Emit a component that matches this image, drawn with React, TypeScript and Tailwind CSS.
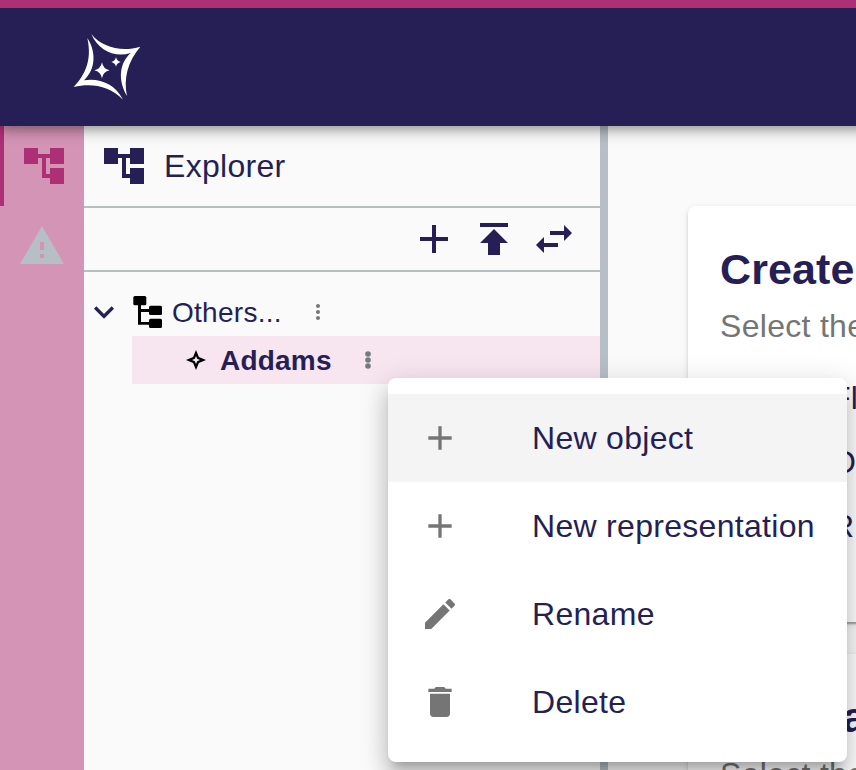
import React from "react";

const TREE = "M22 11V3h-7v3H9V3H2v8h7V8h2v10h4v3h7v-8h-7v3h-2V8h2v3z";
const ADD = "M19 13h-6v6h-2v-6H5v-2h6V5h2v6h6v2z";
const PUBLISH = "M5 4v2h14V4H5zm0 10h4v6h6v-6h4l-7-7-7 7z";
const SWAP = "M6.99 11L3 15l3.99 4v-3H14v-2H6.99v-3zM21 9l-3.99-4v3H10v2h7.01v3L21 9z";
const WARNING = "M1 21h22L12 2 1 21zm12-3h-2v-2h2v2zm0-4h-2v-4h2v4z";
const EXPAND = "M16.59 8.59L12 13.17 7.41 8.59 6 10l6 6 6-6z";
const MORE =
  "M12 8c1.1 0 2-.9 2-2s-.9-2-2-2-2 .9-2 2 .9 2 2 2zm0 2c-1.1 0-2 .9-2 2s.9 2 2 2 2-.9 2-2-.9-2-2-2zm0 6c-1.1 0-2 .9-2 2s.9 2 2 2 2-.9 2-2-.9-2-2-2z";
const EDIT =
  "M3 17.25V21h3.75L17.81 9.94l-3.75-3.75L3 17.25zM20.71 7.04c.39-.39.39-1.02 0-1.41l-2.34-2.34c-.39-.39-1.02-.39-1.41 0l-1.83 1.83 3.75 3.75 1.83-1.83z";
const DELETE = "M6 19c0 1.1.9 2 2 2h8c1.1 0 2-.9 2-2V7H6v12zM19 4h-3.5l-1-1h-5l-1 1H5v2h14V4z";

function Icon({ d, className }: { d: string; className: string }) {
  return (
    <svg viewBox="0 0 24 24" fill="currentColor" className={`shrink-0 ${className}`}>
      <path d={d} />
    </svg>
  );
}

function Logo() {
  return (
    <svg viewBox="0 0 300 270" className="mb-1 ml-[60px] h-[90px] w-[100px]" fill="#fff">
      <path d="M82 54C107 92 110 145 72 181C115 173 165 190 189 239C150 198 95 188 41 201C90 150 92 100 82 54Z" />
      <path d="M94 42C125 82 185 97 241 80C203 125 190 175 201 228C173 180 178 130 212 99C165 114 115 92 94 42Z" />
      <path d="M126 127Q129 147 149 151Q129 155 126 175Q122 155 103 151Q122 147 126 127Z" />
      <path d="M168 111Q170 123 182 126Q170 129 168 140Q166 129 154 126Q166 123 168 111Z" />
    </svg>
  );
}

const MENU = [
  { icon: ADD, label: "New object" },
  { icon: ADD, label: "New representation" },
  { icon: EDIT, label: "Rename" },
  { icon: DELETE, label: "Delete" },
];

function Card({ title, items }: { title: string; items: string[] }) {
  return (
    <section className="h-[416px] w-[800px] shrink-0 rounded-lg bg-white px-8 pt-8 shadow-[0_4px_2px_-2px_rgba(0,0,0,0.2),0_2px_2px_rgba(0,0,0,0.14),0_2px_6px_rgba(0,0,0,0.12)]">
      <h2 className="flex h-[62px] items-center text-[43px] font-bold leading-none tracking-[0.1px]">{title}</h2>
      <p className="flex h-[52px] items-center text-[32px] tracking-[0.3px] text-[#757575]">
        Select the
      </p>
      <ul className="pl-[111px] pt-[14px]">
        {items.map((item) => (
          <li key={item} className="flex h-16 items-center text-[32px] tracking-[0.3px]">
            {item}
          </li>
        ))}
      </ul>
    </section>
  );
}

export default function App() {
  return (
    <div className="relative flex h-[770px] w-[856px] flex-col overflow-hidden whitespace-nowrap bg-[#fafafa] font-['Liberation_Sans',Arial,sans-serif] text-[#251f55] antialiased">
      <header className="relative z-10 flex h-[126px] w-[1200px] shrink-0 items-center border-t-8 border-[#ad3077] bg-[#251f55] shadow-[0_4px_8px_-2px_rgba(0,0,0,0.2),0_8px_10px_rgba(0,0,0,0.14),0_2px_20px_rgba(0,0,0,0.12)]">
        <Logo />
      </header>
      <div className="flex min-h-0 flex-1">
        <nav className="flex w-[84px] shrink-0 flex-col bg-[#d494b6]">
          <div className="flex h-20 items-center border-l-4 border-[#ad3077] pl-4 text-[#ad3077]">
            <Icon d={TREE} className="h-12 w-12" />
          </div>
          <div className="flex h-20 items-center pl-[18px] text-[#b6bfc5]">
            <Icon d={WARNING} className="h-12 w-12" />
          </div>
        </nav>
        <aside className="flex w-[516px] shrink-0 flex-col">
          <div className="flex h-[82px] items-center border-b-2 border-[#b4bfc2] pl-4">
            <Icon d={TREE} className="h-12 w-12" />
            <h1 className="ml-4 text-[32px] tracking-[0.3px]">Explorer</h1>
          </div>
          <div className="flex h-16 items-center justify-end gap-3 border-b-2 border-[#b4bfc2] pr-[22px]">
            <Icon d={ADD} className="h-12 w-12" />
            <Icon d={PUBLISH} className="h-12 w-12" />
            <Icon d={SWAP} className="h-12 w-12" />
          </div>
          <div className="pt-4">
            <div className="flex h-12 items-center">
              <Icon d={EXPAND} className="h-10 w-10" />
              <svg viewBox="0 0 29 32" className="ml-[9px] h-8 w-[29px]" fill="#000">
                <rect x="0.300" y="0" width="13" height="9.300" rx="1.500" />
                <rect x="16" y="9.700" width="13" height="9.300" rx="1.500" />
                <rect x="16" y="22.700" width="13" height="9.300" rx="1.500" />
                <path d="M5 8v20.700h12v-2.700H8v-10h9v-3H8V8z" />
              </svg>
              <span className="ml-[10px] pt-0.5 text-[28px] tracking-[0.28px]">Others...</span>
              <Icon d={MORE} className="ml-6 h-6 w-6 text-[#757575]" />
            </div>
            <div className="ml-12 flex h-12 items-center bg-[#f7e5ef]">
              <svg viewBox="0 0 20 20" className="ml-[54px] h-5 w-5" fill="#000" fillRule="evenodd">
                <path d="M10 0L12.900 7.100L20 10L12.900 12.900L10 20L7.100 12.900L0 10L7.100 7.100ZM10 6L8.800 8.800L6 10L8.800 11.200L10 14L11.200 11.200L14 10L11.200 8.800Z" />
              </svg>
              <span className="ml-[14px] pt-0.5 text-[28px] font-bold tracking-[0.2px]">Addams</span>
              <svg viewBox="0 0 24 24" className="ml-6 h-6 w-6" fill="#757a80">
                <circle cx="12" cy="6" r="2.800" />
                <circle cx="12" cy="12" r="2.800" />
                <circle cx="12" cy="18" r="2.800" />
              </svg>
            </div>
          </div>
        </aside>
        <div className="w-2 shrink-0 bg-[#b6bfc5]" />
        <main className="flex min-w-0 flex-1 flex-col gap-8 pl-20 pt-20">
          <Card title="Create" items={["Fl", "O", "R"]} />
          <Card title="Open a" items={[]} />
        </main>
      </div>
      <div className="absolute left-[388px] top-[378px] z-20 h-[384px] w-[459px] rounded-lg bg-white py-4 shadow-[0_10px_10px_-6px_rgba(0,0,0,0.2),0_16px_20px_2px_rgba(0,0,0,0.14),0_6px_28px_4px_rgba(0,0,0,0.12)]">
        {MENU.map((m, i) => (
          <div key={m.label} className={`flex h-[88px] items-center pl-8 ${i === 0 ? "bg-[#f4f4f4]" : ""}`}>
            <Icon d={m.icon} className="h-10 w-10 text-[#757575]" />
            <span className="ml-[72px] text-[32px] tracking-[0.3px]">{m.label}</span>
          </div>
        ))}
      </div>
    </div>
  );
}
